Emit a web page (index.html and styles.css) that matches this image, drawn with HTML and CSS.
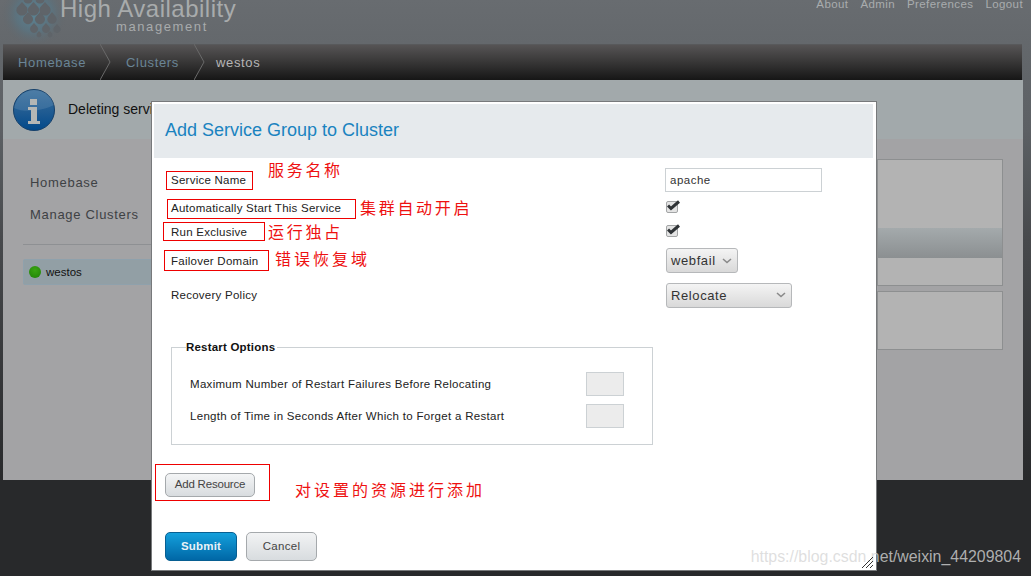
FILE: index.html
```html
<!DOCTYPE html>
<html lang="en">
<head>
    <meta charset="UTF-8">
    <title>High Availability management</title>
    <link rel="stylesheet" href="styles.css">
</head>
<body>
    <div class="header">
        <div class="logo">
            <svg class="logo-dots" width="72" height="44" viewBox="0 0 72 44">
                <defs>
                    <radialGradient id="halo" gradientUnits="userSpaceOnUse" cx="34" cy="14" r="33">
                        <stop offset="0" stop-color="#5a8495"/>
                        <stop offset="0.55" stop-color="#5a7481" stop-opacity="0.8"/>
                        <stop offset="1" stop-color="#62666a" stop-opacity="0"/>
                    </radialGradient>
                </defs>
                <circle cx="34" cy="14" r="33" fill="url(#halo)"/>
                <g fill="#5f6469">
                    <circle cx="28" cy="-1" r="4.500"/><circle cx="40" cy="-1" r="4.500"/>
                    <path d="M22 2l5 5.500a5.600 5.600 0 1 1-10 0z"/><path d="M33.500 2l5 5.500a5.600 5.600 0 1 1-10 0z"/><path d="M45 2l5 5.500a5.600 5.600 0 1 1-10 0z"/>
                    <path d="M28 12l4.500 5a5 5 0 1 1-9 0z"/><path d="M40 12l4.500 5a5 5 0 1 1-9 0z"/><path d="M52 12l4 5a4.600 4.600 0 1 1-8 0z"/>
                    <path d="M34 23l3.500 4a4 4 0 1 1-7 0z"/><path d="M46 23l3.500 4a4 4 0 1 1-7 0z"/><path d="M57 24l3 3.500a3.500 3.500 0 1 1-6 0z"/>
                    <path d="M39 31l2 2.500a2.400 2.400 0 1 1-4 0z"/><path d="M50 31l2 2.500a2.400 2.400 0 1 1-4 0z"/>
                </g>
            </svg>
            <div class="logo-title">High Availability</div>
            <div class="logo-sub">management</div>
        </div>
        <div class="top-links">
            <a>About</a>
            <a>Admin</a>
            <a>Preferences</a>
            <a>Logout</a>
        </div>
    </div>

    <div class="page">
        <div class="crumbs">
            <a class="crumb">Homebase</a>
            <svg class="crumb-sep" width="11" height="36" viewBox="0 0 11 36"><path d="M0 0l10 18-10 18" fill="none" stroke="#6a6a6a"/></svg>
            <a class="crumb">Clusters</a>
            <svg class="crumb-sep" width="11" height="36" viewBox="0 0 11 36"><path d="M0 0l10 18-10 18" fill="none" stroke="#6a6a6a"/></svg>
            <span class="crumb current">westos</span>
        </div>

        <div class="notice">
            <svg class="notice-icon" width="42" height="42" viewBox="0 0 42 42">
                <defs>
                    <linearGradient id="infoBlue" x1="0" y1="0" x2="0" y2="1">
                        <stop offset="0" stop-color="#3a6f9c"/>
                        <stop offset="0.55" stop-color="#1f5b92"/>
                        <stop offset="1" stop-color="#02498a"/>
                    </linearGradient>
                </defs>
                <circle cx="21" cy="21" r="20.500" fill="url(#infoBlue)" stroke="#16406a" stroke-width="1"/>
                <path d="M1 19c10 5 28 3 40-3-2-9-10-15-20-15S3 9 1 19z" fill="#fff" opacity="0.1"/>
                <rect x="17" y="10" width="7" height="6" fill="#b5b7b5"/>
                <path d="M15 18h9v14h3v3H15v-3h3v-11h-3z" fill="#b5b7b5"/>
            </svg>
            <span class="notice-text">Deleting service</span>
        </div>

        <div class="content">
            <div class="sidebar">
                <a class="side-link">Homebase</a>
                <a class="side-link">Manage Clusters</a>
                <div class="side-rule"></div>
                <div class="side-item"><span class="status-dot"></span>westos</div>
            </div>
            <div class="main">
                <div class="panel panel-top">
                    <div class="panel-space"></div>
                    <div class="panel-band"></div>
                    <div class="panel-foot"></div>
                </div>
                <div class="panel panel-low"></div>
            </div>
        </div>
    </div>

    <div class="modal">
        <div class="modal-head">Add Service Group to Cluster</div>

        <div class="form-row row-name">
            <label>Service Name</label>
            <input class="text-input" type="text" value="apache">
        </div>
        <div class="form-row row-auto">
            <label>Automatically Start This Service</label>
            <span class="check"><svg width="14" height="11" viewBox="0 0 14 11"><path d="M1 5.500l3 3 8-7" fill="none" stroke="#2f3336" stroke-width="3"/></svg></span>
        </div>
        <div class="form-row row-excl">
            <label>Run Exclusive</label>
            <span class="check"><svg width="14" height="11" viewBox="0 0 14 11"><path d="M1 5.500l3 3 8-7" fill="none" stroke="#2f3336" stroke-width="3"/></svg></span>
        </div>
        <div class="form-row row-domain">
            <label>Failover Domain</label>
            <span class="select select-short">webfail<svg width="10" height="6" viewBox="0 0 10 6"><path d="M1 1l4 3.500L9 1" fill="none" stroke="#8a8a8a" stroke-width="1.600"/></svg></span>
        </div>
        <div class="form-row row-policy">
            <label>Recovery Policy</label>
            <span class="select select-long">Relocate<svg width="10" height="6" viewBox="0 0 10 6"><path d="M1 1l4 3.500L9 1" fill="none" stroke="#8a8a8a" stroke-width="1.600"/></svg></span>
        </div>

        <fieldset class="options">
            <legend>Restart Options</legend>
            <div class="option-row">
                <span>Maximum Number of Restart Failures Before Relocating</span>
                <span class="small-input"></span>
            </div>
            <div class="option-row">
                <span>Length of Time in Seconds After Which to Forget a Restart</span>
                <span class="small-input"></span>
            </div>
        </fieldset>

        <button class="btn btn-add">Add Resource</button>

        <div class="actions">
            <button class="btn btn-submit">Submit</button>
            <button class="btn btn-cancel">Cancel</button>
        </div>

        <!-- red notes drawn over the screenshot -->
        <div class="box box-name"></div>
        <div class="box box-auto"></div>
        <div class="box box-excl"></div>
        <div class="box box-domain"></div>
        <div class="box box-add"></div>
        <div class="note note-name">服务名称</div>
        <div class="note note-auto">集群自动开启</div>
        <div class="note note-excl">运行独占</div>
        <div class="note note-domain">错误恢复域</div>
        <div class="note note-add">对设置的资源进行添加</div>
    </div>

    <div class="watermark">https://blog.csdn.net/weixin_44209804</div>
    <svg class="grip" width="12" height="12" viewBox="0 0 12 12"><path d="M0 12L11 1M4 12l7-7M8 12l3-3" stroke="#333" stroke-width="1"/></svg>
</body>
</html>
```

FILE: styles.css
```css
/* General Styles */
html, body {
    height: 100%;
}

body {
    margin: 0;
    overflow: hidden;
    font-family: "Liberation Sans", Arial, sans-serif;
    background: linear-gradient(#686c70 0, #5c6064 130px, #47494c 240px, #28292b 480px);
    background-color: #28292b;
}

/* Header */
.header {
    display: flex;
    justify-content: space-between;
    height: 44px;
}

.logo {
    position: relative;
    width: 300px;
}

.logo-dots {
    position: absolute;
    left: 0;
    top: 0;
}

.logo-title {
    position: absolute;
    left: 60px;
    top: -5px;
    font-size: 24px;
    line-height: 28px;
    letter-spacing: 0.5px;
    color: #a8abac;
    white-space: nowrap;
}

.logo-sub {
    position: absolute;
    left: 116px;
    top: 19px;
    font-size: 13px;
    line-height: 16px;
    letter-spacing: 1.6px;
    color: #a8abac;
}

.top-links {
    display: flex;
    gap: 12px;
    padding-right: 8px;
    margin-top: -3px;
    font-size: 11.500px;
    line-height: 14px;
    letter-spacing: 0.4px;
    color: #a9acae;
}

/* Page */
.page {
    margin: 0 8px 0 3px;
}

.crumbs {
    display: flex;
    align-items: center;
    height: 36px;
    margin-right: 1px;
    background: linear-gradient(#565455, #3a3939 45%, #161616);
    border-top: 1px solid #58595b;
    box-sizing: border-box;
    font-size: 13px;
    letter-spacing: 0.65px;
}

.crumb {
    padding: 0 15px;
    color: #6a8596;
}

.crumb:first-child {
    padding-right: 14px;
}

.crumb.current {
    padding-left: 11px;
    color: #b5b5b5;
}

.crumb-sep {
    margin-top: -1px;
}

.notice {
    display: flex;
    align-items: center;
    height: 59px;
    background-color: #a2a9ab;
}

.notice-icon {
    margin-left: 10px;
}

.notice-text {
    margin-left: 13px;
    margin-top: -2px;
    font-size: 14px;
    color: #111;
}

.content {
    display: flex;
    justify-content: space-between;
    height: 341px;
    background-color: #a3a3a5;
}

/* Sidebar */
.sidebar {
    display: flex;
    flex-direction: column;
    width: 180px;
    padding: 36px 0 0 20px;
    box-sizing: border-box;
}

.side-link {
    padding-left: 7px;
    margin-bottom: 16px;
    font-size: 13px;
    line-height: 16px;
    letter-spacing: 0.7px;
    color: #3e4144;
}

.side-rule {
    height: 1px;
    margin-top: 5px;
    background-color: #8e9093;
}

.side-item {
    display: flex;
    align-items: center;
    height: 26px;
    margin-top: 14px;
    box-sizing: border-box;
    border: 1px solid #8fa1ac;
    border-radius: 2px;
    background-color: #929fa5;
    font-size: 11.500px;
    color: #111;
}

.status-dot {
    width: 12px;
    height: 12px;
    margin: 0 5px;
    border-radius: 50%;
    background: radial-gradient(circle at 50% 35%, #3aa512, #1f8106);
}

/* Right panels */
.main {
    width: 126px;
    margin-right: 20px;
    padding-top: 20px;
}

.panel {
    box-sizing: border-box;
    border: 1px solid #8d8f90;
    background-color: #b3b3b3;
}

.panel-top {
    height: 127px;
}

.panel-space {
    height: 68px;
}

.panel-band {
    height: 30px;
    background: linear-gradient(#a4aaac, #8b8f91);
}

.panel-low {
    height: 59px;
    margin-top: 5px;
}

/* Modal */
.modal {
    position: absolute;
    left: 151px;
    top: 101px;
    width: 726px;
    height: 470px;
    box-sizing: border-box;
    border: 1px solid #77797b;
    background-color: #fff;
    padding: 2px 3px 0 2px;
    font-size: 11.500px;
    letter-spacing: 0.25px;
    color: #222;
}

.modal-head {
    height: 54px;
    padding-left: 11px;
    background-color: #e6eaed;
    font-size: 18px;
    line-height: 52px;
    letter-spacing: 0;
    color: #1a83c0;
}

.form-row {
    display: flex;
    align-items: center;
    justify-content: space-between;
    padding-left: 17px;
    padding-right: 51px;
}

.form-row > :last-child {
    margin-right: auto;
}

.form-row label {
    width: 494px;
    flex: none;
}

.row-name {
    height: 24px;
    margin-top: 10px;
}

.row-auto {
    height: 25px;
    margin-top: 2px;
}

.row-auto label,
.row-excl label {
    margin-top: 2px;
}

.row-excl {
    height: 24px;
}

.row-domain {
    height: 35px;
}

.row-policy {
    height: 34px;
}

.text-input {
    width: 157px;
    height: 24px;
    padding: 0 4px;
    box-sizing: border-box;
    border: 1px solid #ccd1d4;
    font: inherit;
    letter-spacing: 0.5px;
    color: #333;
}

.check {
    display: flex;
    align-items: flex-start;
    width: 10px;
    height: 10px;
    margin-left: 1px;
    border: 1px solid #a3a5a6;
    border-radius: 2px;
    background-color: #e4e4e4;
}

.check svg {
    margin-top: -2px;
    flex: none;
}

.select {
    display: flex;
    align-items: center;
    justify-content: space-between;
    height: 25px;
    margin-left: 1px;
    padding: 0 5px 0 4px;
    box-sizing: border-box;
    border: 1px solid #b6b8ba;
    border-radius: 3px;
    background: linear-gradient(#f4f4f4, #d9d9d9);
    font-size: 13px;
    letter-spacing: 0.6px;
    color: #333;
}

.select-short {
    width: 72px;
}

.select-long {
    width: 126px;
}

/* Restart Options */
.options {
    width: 482px;
    height: 104px;
    margin: 29px 0 0 17px;
    padding: 0 28px 0 18px;
    box-sizing: border-box;
    border: 1px solid #ccd1d4;
    border-radius: 0;
    letter-spacing: 0.3px;
}

.options legend {
    padding: 0 2px 0 0;
    margin-left: -4px;
    font-weight: bold;
    letter-spacing: 0.2px;
    color: #111;
}

.option-row {
    display: flex;
    align-items: center;
    justify-content: space-between;
    height: 24px;
    margin-bottom: 8px;
}

.option-row:first-of-type {
    margin-top: 19px;
}

.small-input {
    width: 38px;
    height: 24px;
    box-sizing: border-box;
    border: 1px solid #ccd1d4;
    background-color: #ececec;
}

/* Buttons */
.btn {
    display: block;
    padding: 0 0 2px;
    font-family: inherit;
    font-size: 11.500px;
    box-sizing: border-box;
    cursor: pointer;
}

.btn-add {
    width: 90px;
    height: 24px;
    margin: 28px 0 0 11px;
    border: 1px solid #a5a9ac;
    border-radius: 5px;
    background: linear-gradient(#f4f5f6, #d8dcdf);
    letter-spacing: -0.2px;
    color: #444;
}

.actions {
    display: flex;
    gap: 9px;
    margin: 35px 0 0 11px;
}

.btn-submit {
    width: 72px;
    height: 29px;
    border: 1px solid #075f92;
    border-radius: 5px;
    background: linear-gradient(#14a0dc, #0067a6);
    font-weight: bold;
    letter-spacing: 0.2px;
    color: #e8f2f7;
}

.btn-cancel {
    width: 71px;
    height: 29px;
    border: 1px solid #a5a9ac;
    border-radius: 5px;
    background: linear-gradient(#f2f3f4, #d8dcdf);
    letter-spacing: 0.3px;
    color: #444;
}

/* Red annotations, positions relative to the modal box */
.box {
    position: absolute;
    box-sizing: border-box;
    border: 1px solid #ee0000;
}

.box-name {
    left: 14px;
    top: 69px;
    width: 87px;
    height: 19px;
}

.box-auto {
    left: 15px;
    top: 97px;
    width: 189px;
    height: 20px;
}

.box-excl {
    left: 11px;
    top: 120px;
    width: 102px;
    height: 19px;
}

.box-domain {
    left: 12px;
    top: 148px;
    width: 105px;
    height: 21px;
}

.box-add {
    left: 3px;
    top: 362px;
    width: 115px;
    height: 37px;
}

.note {
    position: absolute;
    font-family: "Noto Sans CJK SC", sans-serif;
    font-size: 16px;
    line-height: 20px;
    letter-spacing: 2.700px;
    color: #ee1111;
    white-space: nowrap;
}

.note-name {
    left: 116px;
    top: 57px;
}

.note-auto {
    left: 208px;
    top: 95px;
    letter-spacing: 2.700px;
}

.note-excl {
    left: 116px;
    top: 119px;
}

.note-domain {
    left: 123px;
    top: 146px;
    letter-spacing: 3px;
}

.note-add {
    left: 143px;
    top: 377px;
    letter-spacing: 3px;
}

/* Watermark */
.watermark {
    position: absolute;
    right: 10px;
    top: 548px;
    font-size: 15.900px;
    line-height: 18px;
    color: rgba(214, 214, 214, 0.78);
}

.grip {
    position: absolute;
    left: 862px;
    top: 556px;
}
```
